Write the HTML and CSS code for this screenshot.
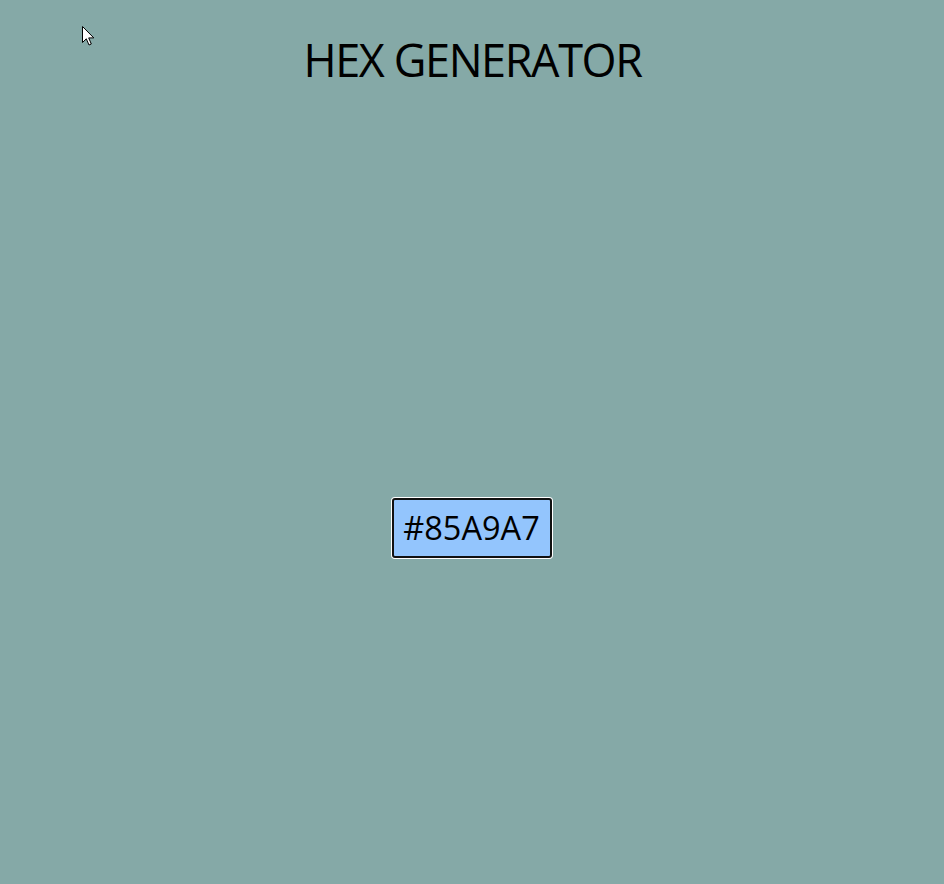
FILE: index.html
```html
<!DOCTYPE html>
<html lang="en">
<head>
<meta charset="utf-8">
<title>Hex Generator</title>
<link rel="stylesheet" href="styles.css">
</head>
<body class="page" style="background-color: #85A9A7;">
  <h1 class="title">HEX GENERATOR</h1>
  <main class="stage">
    <button class="hex-btn" type="button">#85A9A7</button>
  </main>
  <svg class="cursor" width="14" height="21" viewBox="0 0 14 21" aria-hidden="true">
    <path d="M0.5 0.5 L0.5 16.5 L4.3 12.8 L7 19 L9.3 18 L6.7 11.9 L11.8 11.9 Z" fill="#fff" stroke="#000" stroke-width="1" stroke-linejoin="miter"/>
  </svg>
</body>
</html>
```

FILE: styles.css
```css
html, body {
  height: 100%;
}

.page {
  margin: 0;
  min-height: 100vh;
  display: flex;
  flex-direction: column;
  align-items: center;
  font-family: "Open Sans", "Noto Sans", "Liberation Sans", sans-serif;
  color: #000;
  position: relative;
}

.title {
  margin: 28px 0 0;
  padding-left: 1px;
  font-size: 45px;
  line-height: 64px;
  font-weight: 400;
  letter-spacing: -1.4px;
}

.stage {
  flex: 1;
  width: 100%;
  display: flex;
  align-items: center;
  justify-content: center;
  padding-top: 79px;
  box-sizing: border-box;
}

.hex-btn {
  box-sizing: border-box;
  width: 160px;
  height: 60px;
  margin-left: -1px;
  padding: 2px 0 0;
  font-family: inherit;
  font-size: 32.5px;
  line-height: 1;
  color: #000;
  background: #93c5fd;
  border: 2px solid #111;
  border-radius: 3px;
  box-shadow: 0 0 0 1px #fff;
  cursor: pointer;
}

.cursor {
  position: absolute;
  left: 82px;
  top: 26px;
}
```
